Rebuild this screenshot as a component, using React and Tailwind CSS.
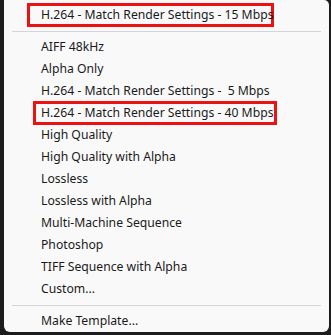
import React from 'react';

const items = [
  { label: 'AIFF 48kHz' },
  { label: 'Alpha Only' },
  { label: 'H.264 - Match Render Settings -  5 Mbps' },
  { label: 'H.264 - Match Render Settings - 40 Mbps', marked: true },
  { label: 'High Quality' },
  { label: 'High Quality with Alpha' },
  { label: 'Lossless' },
  { label: 'Lossless with Alpha' },
  { label: 'Multi-Machine Sequence' },
  { label: 'Photoshop' },
  { label: 'TIFF Sequence with Alpha' },
  { label: 'Custom...' },
];

const Row = ({ label, boxClass }) => (
  <div className="relative flex h-[22px] items-center pl-[37px] whitespace-pre">
    {boxClass && <div className={`pointer-events-none absolute border-[3px] border-[#ee1111] ${boxClass}`} />}
    <span className="relative">{label}</span>
  </div>
);

const Separator = () => (
  <div className="flex h-[10px] items-center px-[8px]">
    <div className="h-px w-full bg-[#d5d5d5]" />
  </div>
);

export default function App() {
  return (
    <div className="h-[335px] w-[331px] overflow-hidden bg-[#1c1c1c] pl-[4px] pr-[2px]" style={{ fontFamily: '"Noto Sans", sans-serif' }}>
      <div className="h-[332px] rounded-b-[6px] rounded-tr-[5px] bg-[#f9f9f9] pt-[4px] text-[12.2px] text-[#1a1a1a]">
        <Row label="H.264 - Match Render Settings - 15 Mbps" boxClass="left-[23px] top-[-1px] h-[24px] w-[247px]" />
        <Separator />
        {items.map((it) => (
          <Row key={it.label} label={it.label} boxClass={it.marked ? 'left-[29px] top-[-1px] h-[24px] w-[244px]' : null} />
        ))}
        <Separator />
        <Row label="Make Template..." />
      </div>
    </div>
  );
}
